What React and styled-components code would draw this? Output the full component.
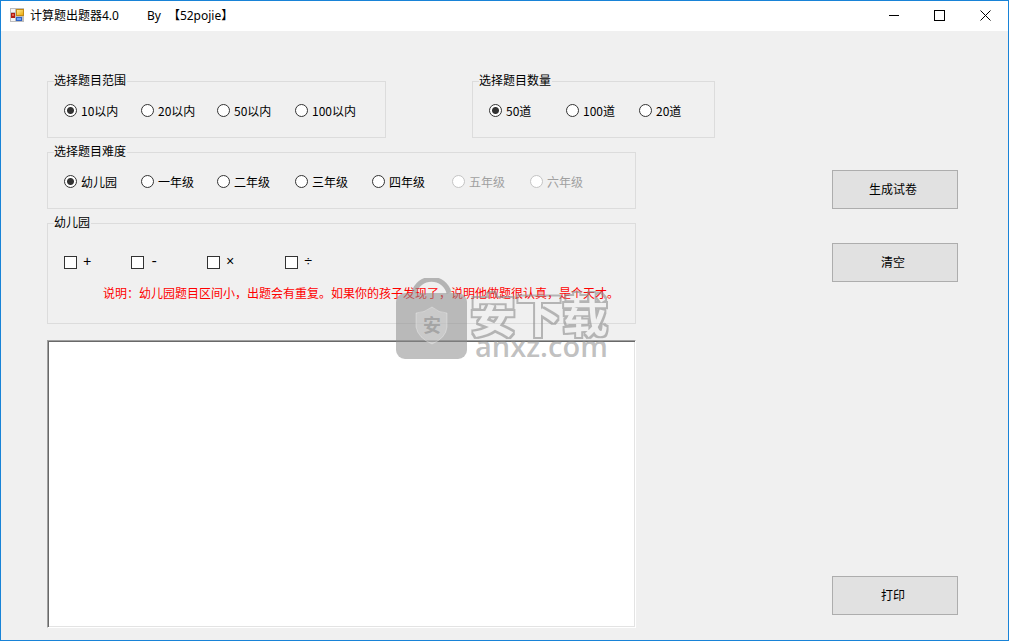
import React, { useState } from "react";
import styled, { createGlobalStyle } from "styled-components";

const ranges = ["10以内", "20以内", "50以内", "100以内"];
const amounts = ["50道", "100道", "20道"];
const grades = ["幼儿园", "一年级", "二年级", "三年级", "四年级", "五年级", "六年级"];
const lockedGrades = ["五年级", "六年级"];
const operators = ["+", "-", "×", "÷"];

function RadioGroup({ title, name, options, locked = [], columns, grow, value, onChange }) {
  return (
    <Group $grow={grow}>
      <Legend>{title}</Legend>
      <Options $columns={columns}>
        {options.map((option) => (
          <Option key={option} $disabled={locked.includes(option)}>
            <Radio
              type="radio"
              name={name}
              value={option}
              checked={value === option}
              disabled={locked.includes(option)}
              onChange={() => onChange(option)}
            />
            {option}
          </Option>
        ))}
      </Options>
    </Group>
  );
}

function AppIcon() {
  return (
    <svg width="15" height="15" viewBox="0 0 15 15" aria-hidden="true">
      <defs>
        <linearGradient id="gold" x1="0" y1="0" x2="1" y2="1">
          <stop offset="0" stopColor="#fff0a0" />
          <stop offset="1" stopColor="#e8a400" />
        </linearGradient>
      </defs>
      <rect x="0" y="0" width="14" height="14" fill="#bdbdbd" />
      <rect x="1" y="1" width="4" height="3" fill="#f4f4f4" />
      <rect x="1" y="10" width="4" height="3" fill="#f4f4f4" />
      <rect x="1" y="5" width="4" height="5" fill="#b01c12" />
      <rect x="2" y="6" width="2" height="2" fill="#e8604c" />
      <rect x="6" y="9" width="6" height="4" fill="#2f62c4" />
      <rect x="7" y="10" width="4" height="2" fill="#6ea4f4" />
      <rect x="6.5" y="1.5" width="7" height="6" fill="url(#gold)" stroke="#c48a12" />
    </svg>
  );
}

function Watermark() {
  return (
    <WatermarkSvg width="220" height="92" viewBox="0 0 220 92" aria-hidden="true">
      <defs>
        <filter id="outline" x="-5%" y="-5%" width="110%" height="110%">
          <feMorphology in="SourceAlpha" operator="dilate" radius="2" result="fat" />
          <feFlood floodColor="#8c8c8c" floodOpacity="0.6" />
          <feComposite in2="fat" operator="in" />
          <feComposite in2="SourceAlpha" operator="out" />
        </filter>
      </defs>
      <path d="M18 15 A18 18 0 0 1 53 15" fill="none" stroke="#8c8c8c" strokeOpacity="0.6" strokeWidth="5" />
      <rect x="0" y="15" width="71" height="66" rx="9" fill="#8c8c8c" fillOpacity="0.55" />
      <path d="M36 29 Q43 35 51 35 V49 Q50 60 36 66 Q22 60 20 49 V35 Q28 35 36 29 Z" fill="#ffffff" fillOpacity="0.25" stroke="#ffffff" strokeOpacity="0.3" />
      <MarkText x="36" y="54" $size={18} textAnchor="middle" fill="#8c8c8c" fillOpacity="0.6">安</MarkText>
      <MarkText x="74" y="54" $size={46} filter="url(#outline)">安下载</MarkText>
      <MarkText x="79" y="79" $size={29} $latin fill="#8c8c8c" fillOpacity="0.55">anxz.com</MarkText>
    </WatermarkSvg>
  );
}

function App() {
  const [range, setRange] = useState("10以内");
  const [amount, setAmount] = useState("50道");
  const [grade, setGrade] = useState("幼儿园");
  const [paper, setPaper] = useState("");

  return (
    <Window>
      <GlobalStyle />
      <TitleBar>
        <AppIcon />
        <Title>
          <span>计算题出题器4.0</span>
          <span>By</span>
          <Author>【52pojie】</Author>
        </Title>
        <Control aria-label="最小化">
          <svg width="11" height="11" viewBox="0 0 11 11"><path d="M1 5.5H11" stroke="#000" /></svg>
        </Control>
        <Control aria-label="最大化">
          <svg width="11" height="11" viewBox="0 0 11 11"><rect x="0.5" y="0.5" width="10" height="10" fill="none" stroke="#000" /></svg>
        </Control>
        <Control aria-label="关闭">
          <svg width="11" height="11" viewBox="0 0 11 11"><path d="M0.5 0.5L10.5 10.5M10.5 0.5L0.5 10.5" stroke="#000" /></svg>
        </Control>
      </TitleBar>
      <Body>
        <Settings>
          <TopRow>
            <RadioGroup title="选择题目范围" name="range" options={ranges} columns="77px 76px 78px" grow={339} value={range} onChange={setRange} />
            <RadioGroup title="选择题目数量" name="amount" options={amounts} columns="77px 73px" grow={243} value={amount} onChange={setAmount} />
          </TopRow>
          <Stack>
            <RadioGroup title="选择题目难度" name="grade" options={grades} locked={lockedGrades} columns="77px 76px 78px 77px 80px 78px" value={grade} onChange={setGrade} />
            <Group $tall>
              <Legend>{grade}</Legend>
              <Options $columns="67px 76px 78px">
                {operators.map((operator) => (
                  <Operator key={operator}>
                    <Checkbox type="checkbox" name={operator} />
                    {operator}
                  </Operator>
                ))}
              </Options>
              <Note>说明：幼儿园题目区间小，出题会有重复。如果你的孩子发现了，说明他做题很认真，是个天才。</Note>
            </Group>
            <Paper aria-label="试卷" value={paper} onChange={(e) => setPaper(e.target.value)} />
            <Watermark />
          </Stack>
        </Settings>
        <Actions>
          <Button>生成试卷</Button>
          <Button onClick={() => setPaper("")}>清空</Button>
          <Button $last onClick={() => window.print()}>打印</Button>
        </Actions>
      </Body>
    </Window>
  );
}

export default App;

const GlobalStyle = createGlobalStyle`
  * {
    box-sizing: border-box;
  }

  body {
    margin: 0;
    color: #000;
    font-family: "Noto Sans CJK SC", sans-serif;
    font-size: 12px;
    line-height: 15px;
  }

  button, input, textarea {
    font: inherit;
    color: inherit;
  }
`;

const Window = styled.div`
  min-height: 100vh;
  display: flex;
  flex-direction: column;
  border: 1px solid #1883d7;
  background: #f0f0f0;
`;

const TitleBar = styled.header`
  display: flex;
  align-items: center;
  height: 30px;
  padding: 0 0 2px 9px;
  background: #fff;
`;

const Title = styled.h1`
  flex: 1;
  display: flex;
  gap: 28px;
  margin: 0 0 0 5px;
  font-family: "Noto Sans", "Noto Sans CJK SC", sans-serif;
  font-size: 12px;
  font-weight: normal;
`;

const Author = styled.span`
  margin-left: -21px;
`;

const Control = styled.button`
  display: flex;
  align-items: center;
  justify-content: center;
  width: 46px;
  height: 28px;
  padding: 0;
  border: 0;
  background: none;

  &:hover {
    background: #e5e5e5;
  }
`;

const Body = styled.main`
  flex: 1;
  display: grid;
  grid-template-columns: minmax(0, 1fr) 126px;
  gap: 117px;
  padding: 0 50px 0 46px;
`;

const Settings = styled.div`
  display: flex;
  flex-direction: column;
  gap: 5px;
  padding: 41px 0 12px;
`;

const TopRow = styled.div`
  display: flex;
  gap: 86px;
`;

const Stack = styled.div`
  position: relative;
  flex: 1;
  display: flex;
  flex-direction: column;
  gap: 5px;
  margin-right: 79px;
`;

const Group = styled.fieldset`
  flex: ${(props) => (props.$grow ? `${props.$grow} 1 ${props.$grow}px` : "none")};
  min-width: 0;
  margin: 0;
  padding: ${(props) => (props.$tall ? "22px 6px 23px" : "12px 6px 19px")};
  border: 1px solid #dcdcdc;
`;

const Legend = styled.legend`
  padding: 0 1px 4px 0;
`;

const Options = styled.div`
  display: grid;
  grid-template-columns: ${(props) => props.$columns};
  grid-auto-columns: max-content;
  grid-auto-flow: column;
  padding-left: 10px;
`;

const Option = styled.label`
  display: flex;
  align-items: center;
  gap: 4px;
  white-space: nowrap;
  color: ${(props) => (props.$disabled ? "#a0a0a0" : "#000")};
`;

const Operator = styled(Option)`
  font-family: "Liberation Mono", monospace;
  font-size: 14px;
`;

const Radio = styled.input`
  appearance: none;
  width: 13px;
  height: 13px;
  margin: 0;
  border: 1px solid #333;
  border-radius: 50%;
  background: #fff;

  &:checked {
    background: radial-gradient(circle, #333 3px, #fff 4px);
  }

  &:disabled {
    border-color: #c4c4c4;
  }
`;

const Checkbox = styled.input`
  appearance: none;
  width: 13px;
  height: 13px;
  margin: 0 2px 0 0;
  border: 1px solid #333;
  background: #fff;

  &:checked {
    box-shadow: inset 0 0 0 2px #fff;
    background: #333;
  }
`;

const Note = styled.p`
  margin: 15px 0 0;
  padding-left: 49px;
  color: #f00;
  white-space: nowrap;
`;

const Paper = styled.textarea`
  flex: 1;
  width: 100%;
  min-height: 160px;
  margin-top: 11px;
  padding: 3px;
  resize: none;
  outline: 0;
  background: #fff;
  border: 1px solid;
  border-color: #a0a0a0 #fff #fff #a0a0a0;
  box-shadow: inset 1px 1px #696969, inset -1px -1px #e3e3e3;
`;

const WatermarkSvg = styled.svg`
  position: absolute;
  top: 135px;
  left: 349px;
  pointer-events: none;
`;

const MarkText = styled.text`
  font-family: ${(props) => (props.$latin ? '"Open Sans"' : '"Noto Sans CJK SC"')}, sans-serif;
  font-size: ${(props) => props.$size}px;
  font-weight: ${(props) => (props.$latin ? 600 : 700)};
`;

const Actions = styled.div`
  display: flex;
  flex-direction: column;
  gap: 34px;
  padding: 139px 0 25px;
`;

const Button = styled.button`
  height: 39px;
  margin-top: ${(props) => (props.$last ? "auto" : "0")};
  padding: 0 4px 2px 0;
  border: 1px solid #adadad;
  background: #e1e1e1;

  &:hover {
    border-color: #0078d7;
    background: #e5f1fb;
  }
`;
